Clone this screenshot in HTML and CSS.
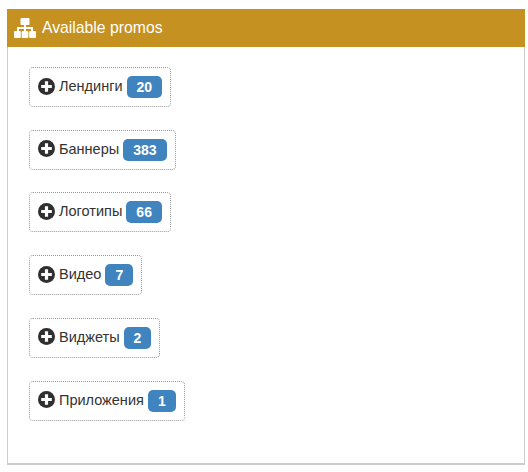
FILE: index.html
```html
<!DOCTYPE html>
<html lang="ru">
<head>
    <meta charset="UTF-8">
    <title>Available promos</title>
    <link rel="stylesheet" href="styles.css">
</head>
<body>
    <div class="panel">
        <div class="panel-heading">
            <svg class="sitemap" viewBox="0 0 22 20" width="22" height="20">
                <rect x="6.5" y="0" width="9" height="7" rx="1" />
                <rect x="0" y="13" width="6.8" height="7" rx="1" />
                <rect x="7.6" y="13" width="6.8" height="7" rx="1" />
                <rect x="15.2" y="13" width="6.8" height="7" rx="1" />
                <path d="M10 6h2v3h7v5h-2v-3h-5v3h-2v-3H5v3H3V9h7z" />
            </svg>
            <span class="panel-title">Available promos</span>
        </div>
        <div class="panel-body">
            <div class="promo"><svg class="plus" viewBox="0 0 16 16"><circle cx="8" cy="8" r="8" /><path class="cross" d="M6.5 3h3v3.5H13v3H9.5V13h-3V9.500H3v-3h3.500z" /></svg>Лендинги <span class="badge">20</span></div>
            <div class="promo"><svg class="plus" viewBox="0 0 16 16"><circle cx="8" cy="8" r="8" /><path class="cross" d="M6.5 3h3v3.5H13v3H9.5V13h-3V9.500H3v-3h3.500z" /></svg>Баннеры <span class="badge">383</span></div>
            <div class="promo"><svg class="plus" viewBox="0 0 16 16"><circle cx="8" cy="8" r="8" /><path class="cross" d="M6.5 3h3v3.5H13v3H9.5V13h-3V9.500H3v-3h3.500z" /></svg>Логотипы <span class="badge">66</span></div>
            <div class="promo"><svg class="plus" viewBox="0 0 16 16"><circle cx="8" cy="8" r="8" /><path class="cross" d="M6.5 3h3v3.5H13v3H9.5V13h-3V9.500H3v-3h3.500z" /></svg>Видео <span class="badge">7</span></div>
            <div class="promo"><svg class="plus" viewBox="0 0 16 16"><circle cx="8" cy="8" r="8" /><path class="cross" d="M6.5 3h3v3.5H13v3H9.5V13h-3V9.500H3v-3h3.500z" /></svg>Виджеты <span class="badge">2</span></div>
            <div class="promo"><svg class="plus" viewBox="0 0 16 16"><circle cx="8" cy="8" r="8" /><path class="cross" d="M6.5 3h3v3.5H13v3H9.5V13h-3V9.500H3v-3h3.500z" /></svg>Приложения <span class="badge">1</span></div>
        </div>
    </div>
</body>
</html>
```

FILE: styles.css
```css
body {
    margin: 0;
    padding: 9px 3px 0 7px;
    font-family: "Liberation Sans", Arial, sans-serif;
    font-size: 14.5px;
    color: #333;
    background-color: #fff;
}

.panel {
    height: 456px;
    box-sizing: border-box;
    border: 1px solid #ccc;
    border-bottom-width: 2px;
}

.panel-heading {
    display: flex;
    align-items: center;
    gap: 6px;
    height: 38px;
    margin: -1px -1px 0;
    padding-left: 7px;
    background-color: #c59120;
    color: #fff;
}

.panel-title {
    font-size: 15.75px;
}

.sitemap {
    fill: #fff;
}

.panel-body {
    display: flex;
    flex-direction: column;
    align-items: flex-start;
    gap: 22.72px;
    padding: 20px 21px;
}

.promo {
    display: flex;
    align-items: center;
    height: 40px;
    box-sizing: border-box;
    padding: 0 8px 2px;
    border: 1px dotted #999;
    border-radius: 4px;
    white-space: pre;
}

.plus {
    width: 17px;
    height: 17px;
    margin-right: 4px;
    fill: #2f2f2f;
}

.cross {
    fill: #fff;
}

.badge {
    margin-top: 2px;
    padding: 4px 10px;
    border-radius: 5px;
    background-color: #4084bf;
    color: #fff;
    font-size: 14px;
    font-weight: bold;
    line-height: 14px;
    text-align: center;
}
```
